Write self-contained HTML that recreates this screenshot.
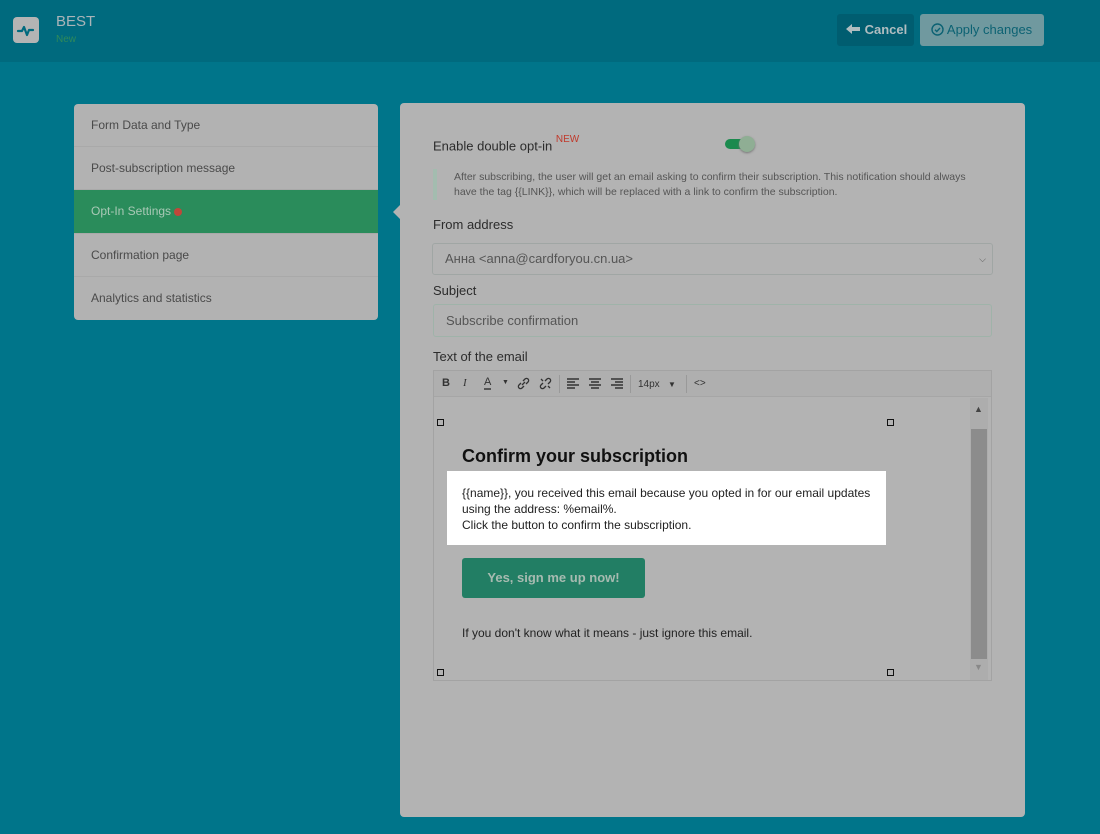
<!DOCTYPE html>
<html><head><meta charset="utf-8"><style>
*{box-sizing:border-box;margin:0;padding:0}
body{width:1100px;height:834px;background:#00758a;font-family:"Liberation Sans",sans-serif;position:relative;overflow:hidden;color:#333}
.a{position:absolute}
#hdr{left:0;top:0;width:1100px;height:62px;background:#006a7e}
.side{left:74px;top:104px;width:304px;height:216px;background:#b2b2b2;border-radius:4px;overflow:hidden}
.side div{height:43px;border-bottom:1px solid #a9a9a9;padding-left:17px;line-height:42px;font-size:12px;color:#4a4a4a}
.side div.act{background:#2a8c5b;color:#a9c9b6;height:44px}
.panel{left:400px;top:103px;width:625px;height:714px;background:#b3b3b3;border-radius:4px}
.lbl{font-size:13px;color:#2c2c2c}
.inp{border:1px solid #a0a6a4;border-radius:3px;font-size:13px;color:#555;padding-left:12px}
.tb{font-size:11px;color:#333}
.hd{width:7px;height:7px;border:1px solid #111}
</style></head><body>
<div id="hdr" class="a"></div>
<div class="a" style="left:13px;top:17px;width:26px;height:26px;background:#b4b4b4;border-radius:4px">
<svg width="26" height="26" viewBox="0 0 26 26"><path d="M5 14h4l2-4 3 8 2-5h4" fill="none" stroke="#006a7e" stroke-width="2.2" stroke-linecap="round" stroke-linejoin="round"/></svg></div>
<div class="a" style="left:56px;top:13px;font-size:15px;color:#aab4b8">BEST</div>
<div class="a" style="left:56px;top:34px;font-size:10px;color:#2f8a5a">New</div>
<div class="a" style="left:837px;top:14px;width:77px;height:32px;background:#005d70;border-radius:3px;color:#b0bdc0;font-size:13px;font-weight:bold;line-height:32px;padding-left:8px">
<svg width="16" height="12" viewBox="0 0 16 12" style="vertical-align:-1px"><path d="M1 6l6-5v3h8v4H7v3z" fill="#b0bdc0"/></svg> Cancel</div>
<div class="a" style="left:920px;top:14px;width:124px;height:32px;background:#70999f;border-radius:3px;color:#0c6273;font-size:13px;line-height:32px;padding-left:11px">
<svg width="13" height="13" viewBox="0 0 13 13" style="vertical-align:-2px"><circle cx="6.5" cy="6.5" r="5.5" fill="none" stroke="#0c6273" stroke-width="1.4"/><path d="M4 6.7l1.8 1.8L9 5" fill="none" stroke="#0c6273" stroke-width="1.4"/></svg> Apply changes</div>

<div class="a side">
<div>Form Data and Type</div><div>Post-subscription message</div>
<div class="act">Opt-In Settings <span style="display:inline-block;width:8px;height:8px;border-radius:50%;background:#c0473a;vertical-align:-1px"></span></div>
<div>Confirmation page</div><div style="border:0">Analytics and statistics</div></div>
<div class="a" style="left:393px;top:204px;width:0;height:0;border-top:8px solid transparent;border-bottom:8px solid transparent;border-right:8px solid #b3b3b3"></div>

<div class="a panel"></div>
<div class="a lbl" style="left:433px;top:137px">Enable double opt-in <sup style="color:#c0392b;font-size:10px;position:relative;top:-3px">NEW</sup></div>
<div class="a" style="left:725px;top:139px;width:28px;height:10px;background:#1b8a4e;border-radius:5px"></div>
<div class="a" style="left:739px;top:136px;width:16px;height:16px;background:#8fae94;border-radius:50%;box-shadow:0 1px 2px #777"></div>
<div class="a" style="left:433px;top:169px;width:4px;height:31px;background:#a3bcaf"></div>
<div class="a" style="left:454px;top:170px;width:520px;font-size:10.5px;line-height:15px;color:#555">After subscribing, the user will get an email asking to confirm their subscription. This notification should always have the tag {{LINK}}, which will be replaced with a link to confirm the subscription.</div>
<div class="a lbl" style="left:433px;top:217px">From address</div>
<div class="a inp" style="left:432px;top:243px;width:561px;height:32px;line-height:30px">Анна &lt;anna@cardforyou.cn.ua&gt;<span style="position:absolute;right:6px;font-size:9px">&#x2335;</span></div>
<div class="a lbl" style="left:433px;top:283px">Subject</div>
<div class="a inp" style="left:433px;top:304px;width:559px;height:33px;line-height:31px;border-color:#9fb3a9">Subscribe confirmation</div>
<div class="a lbl" style="left:433px;top:349px">Text of the email</div>

<div class="a" style="left:433px;top:370px;width:559px;height:311px;border:1px solid #a3a3a3;background:#b3b3b3"></div>
<div class="a" style="left:434px;top:371px;width:557px;height:26px;background:#afafaf;border-bottom:1px solid #a6a6a6"></div>
<div class="a tb" style="left:442px;top:377px;font-weight:bold">B</div>
<div class="a tb" style="left:463px;top:377px;font-style:italic;font-family:'Liberation Serif'">I</div>
<div class="a tb" style="left:484px;top:376px;border-bottom:2px solid #555;line-height:12px">A</div>
<div class="a tb" style="left:502px;top:379px;font-size:7px">▼</div>
<svg class="a" style="left:517px;top:377px" width="13" height="13" viewBox="0 0 13 13"><path d="M5 8l3-3M4 6l-2 2a2 2 0 003 3l2-2M9 7l2-2a2 2 0 00-3-3L6 4" fill="none" stroke="#333" stroke-width="1.3"/></svg>
<svg class="a" style="left:539px;top:377px" width="13" height="13" viewBox="0 0 13 13"><path d="M4 6l-2 2a2 2 0 003 3l2-2M9 7l2-2a2 2 0 00-3-3L6 4M2 2l2 2M11 11l-2-2" fill="none" stroke="#333" stroke-width="1.3"/></svg>
<div class="a" style="left:559px;top:375px;width:1px;height:18px;background:#999"></div>
<svg class="a" style="left:567px;top:378px" width="60" height="12"><g stroke="#333" stroke-width="1.5"><path d="M0 1h12M0 4h8M0 7h12M0 10h8"/><path d="M22 1h12M24 4h8M22 7h12M24 10h8"/><path d="M44 1h12M48 4h8M44 7h12M48 10h8"/></g></svg>
<div class="a" style="left:630px;top:375px;width:1px;height:18px;background:#999"></div>
<div class="a tb" style="left:638px;top:379px;font-size:10px">14px</div>
<div class="a tb" style="left:668px;top:380px;font-size:8px">▼</div>
<div class="a" style="left:686px;top:375px;width:1px;height:18px;background:#999"></div>
<div class="a tb" style="left:694px;top:378px;font-size:10px">&lt;&gt;</div>

<div class="a" style="left:970px;top:398px;width:18px;height:282px;background:#adadad"></div>
<div class="a" style="left:971px;top:429px;width:16px;height:230px;background:#8c8c8c"></div>
<div class="a" style="left:974px;top:404px;font-size:9px;color:#444">▲</div>
<div class="a" style="left:974px;top:662px;font-size:9px;color:#888">▼</div>
<div class="a hd" style="left:437px;top:419px"></div>
<div class="a hd" style="left:887px;top:419px"></div>
<div class="a hd" style="left:437px;top:669px"></div>
<div class="a hd" style="left:887px;top:669px"></div>
<div class="a" style="left:462px;top:446px;font-size:18px;font-weight:bold;color:#111">Confirm your subscription</div>
<div class="a" style="left:447px;top:471px;width:439px;height:74px;background:#fff"></div>
<div class="a" style="left:462px;top:485px;font-size:12px;line-height:16px;color:#222">{{name}}, you received this email because you opted in for our email updates<br>using the address: %email%.<br>Click the button to confirm the subscription.</div>
<div class="a" style="left:462px;top:558px;width:183px;height:40px;background:#227e64;border-radius:3px;color:#a7bbb1;font-weight:bold;font-size:13px;line-height:40px;text-align:center">Yes, sign me up now!</div>
<div class="a" style="left:462px;top:626px;font-size:12px;color:#222">If you don't know what it means - just ignore this email.</div>
</body></html>
